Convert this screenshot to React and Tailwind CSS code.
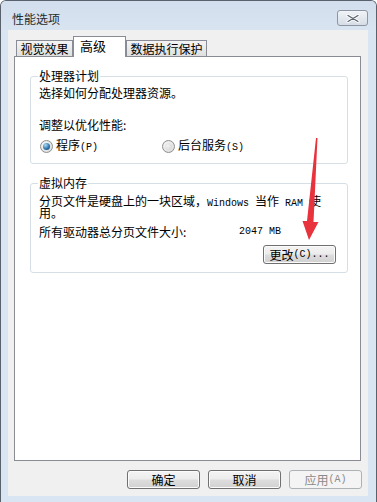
const cjk = "font-['Noto_Sans_CJK_SC','Noto_Sans',sans-serif]";

// SimSun's latin glyphs are half width, so latin runs go in a narrow mono font
function M({ children }) {
  return (
    <span className="font-['Liberation_Mono',monospace] text-[10px]">{children}</span>
  );
}

function Btn({ children, disabled }) {
  return (
    <div
      className={
        disabled
          ? "w-[73px] h-[19px] rounded-[3px] border border-[#adb2b5] bg-[#f4f4f4] text-[#8a8a8a] flex items-center justify-center text-[12px] leading-[12px]"
          : "w-[73px] h-[19px] rounded-[3px] border border-[#707070] bg-[linear-gradient(#f4f4f4_0%,#ececec_48%,#dddddd_52%,#d1d1d1_100%)] shadow-[inset_0_0_0_1px_#fbfbfb] text-black flex items-center justify-center text-[12px] leading-[12px]"
      }
    >
      {children}
    </div>
  );
}

function Radio({ checked }) {
  return (
    <span className="w-[13px] h-[13px] rounded-full border border-[#8e8f8f] bg-[radial-gradient(circle_at_40%_40%,#ffffff,#d2d2d2)] flex items-center justify-center shrink-0">
      {checked ? (
        <span className="w-[7px] h-[7px] rounded-full bg-[radial-gradient(circle_at_35%_30%,#a9dcf8,#2a6ea3_60%,#174a78)]" />
      ) : (
        <span className="w-[7px] h-[7px] rounded-full bg-[radial-gradient(circle_at_40%_40%,#f4f4f4,#cfcfcf)]" />
      )}
    </span>
  );
}

function Group({ title, className, children }) {
  return (
    <div
      className={
        "relative ml-[15px] w-[318px] rounded-[3px] border border-[#d5dfe5] pl-[8px] " +
        className
      }
    >
      <span className="absolute -top-[7px] left-[7px] bg-white px-[1px] leading-[12px]">
        {title}
      </span>
      {children}
    </div>
  );
}

export default function App() {
  return (
    <div
      className={
        "relative w-[377px] h-[502px] bg-[#dae5f3] border border-b-0 border-[#59616c] rounded-t-[6px] overflow-hidden flex flex-col text-[12px] text-black " +
        cjk
      }
    >
      {/* title bar */}
      <div className="h-[29px] shrink-0 flex items-start justify-between pl-[11px] pr-[8px] bg-[linear-gradient(#d2deed,#d9e4f1)]">
        <span className="pt-[11px] leading-[14px] text-[#2a2a2a]">性能选项</span>
        <div className="mt-[9px] w-[31px] h-[16px] rounded-[3px] border border-[#8d96a2] bg-[linear-gradient(#f1f4f8,#d6dde6)] flex items-center justify-center">
          <svg width="14" height="9" viewBox="0 0 14 9">
            <path d="M2 1.5 L12 7.5 M12 1.5 L2 7.5" stroke="#ffffff" strokeWidth="3.2" strokeLinecap="round" />
            <path d="M2 1.5 L12 7.5 M12 1.5 L2 7.5" stroke="#5d6671" strokeWidth="1.4" strokeLinecap="round" />
          </svg>
        </div>
      </div>

      {/* body */}
      <div className="ml-[7px] mr-[8px] flex-1 bg-[#f0f0f0] flex flex-col">
        <div className="mt-[6px] ml-[6px] w-[347px]">
          {/* tabs */}
          <div className="flex items-end h-[20px] pl-[2px]">
            <div className="h-[16px] w-[57px] border border-b-0 border-[#898c95] bg-[linear-gradient(#f4f4f4,#dfdfdf)] flex items-center justify-center leading-[12px]">
              视觉效果
            </div>
            <div className="relative z-10 -mb-px h-[21px] w-[53px] border border-b-0 border-[#898c95] bg-white pl-[6px] pt-[2px] leading-[14px] text-[13px]">
              高级
            </div>
            <div className="h-[16px] w-[81px] border border-b-0 border-[#898c95] bg-[linear-gradient(#f4f4f4,#dfdfdf)] flex items-center justify-center leading-[12px]">
              数据执行保护
            </div>
          </div>

          {/* panel */}
          <div className="h-[405px] border border-[#898c95] bg-white">
            <Group title="处理器计划" className="mt-[19px] h-[88px] pt-[10px]">
              <div className="leading-[12px]">
                选择如何分配处理器资源。
              </div>
              <div className="mt-[20px] leading-[12px]">调整以优化性能:</div>
              <div className="mt-[8px] h-[14px] flex items-center">
                <div className="w-[123px] flex items-center gap-[3px] pl-[1px]">
                  <Radio checked />
                  <span className="leading-[12px]">
                    程序<M>(P)</M>
                  </span>
                </div>
                <div className="flex items-center gap-[3px]">
                  <Radio />
                  <span className="leading-[12px]">
                    后台服务<M>(S)</M>
                  </span>
                </div>
              </div>
            </Group>

            <Group title="虚拟内存" className="mt-[19px] h-[90px] pt-[11px]">
              <div className="h-[12px] leading-[12px]">
                分页文件是硬盘上的一块区域，<M>Windows </M>当作<M> RAM </M>使
              </div>
              <div className="h-[12px] leading-[12px]">用。</div>
              <div className="mt-[7px] flex leading-[12px]">
                <span className="w-[200px]">所有驱动器总分页文件大小:</span>
                <M>2047 MB</M>
              </div>
              <div className="mt-[7px] flex justify-end pr-[11px]">
                <Btn>
                  更改<M>(C)...</M>
                </Btn>
              </div>
            </Group>
          </div>
        </div>

        {/* dialog buttons */}
        <div className="mt-[9px] flex justify-end gap-[8px] pr-[6px]">
          <Btn>确定</Btn>
          <Btn>取消</Btn>
          <Btn disabled>
            应用<M>(A)</M>
          </Btn>
        </div>
      </div>
      <div className="h-[6px] shrink-0" />

      {/* red annotation arrow */}
      <svg
        className="absolute left-0 top-0 pointer-events-none"
        width="377"
        height="502"
        viewBox="0 0 377 502"
      >
        <polygon
          points="315,137 316.5,137 312.5,221 317.5,221 308,239 301.5,220 306,220"
          fill="#e8323c"
        />
      </svg>
    </div>
  );
}
